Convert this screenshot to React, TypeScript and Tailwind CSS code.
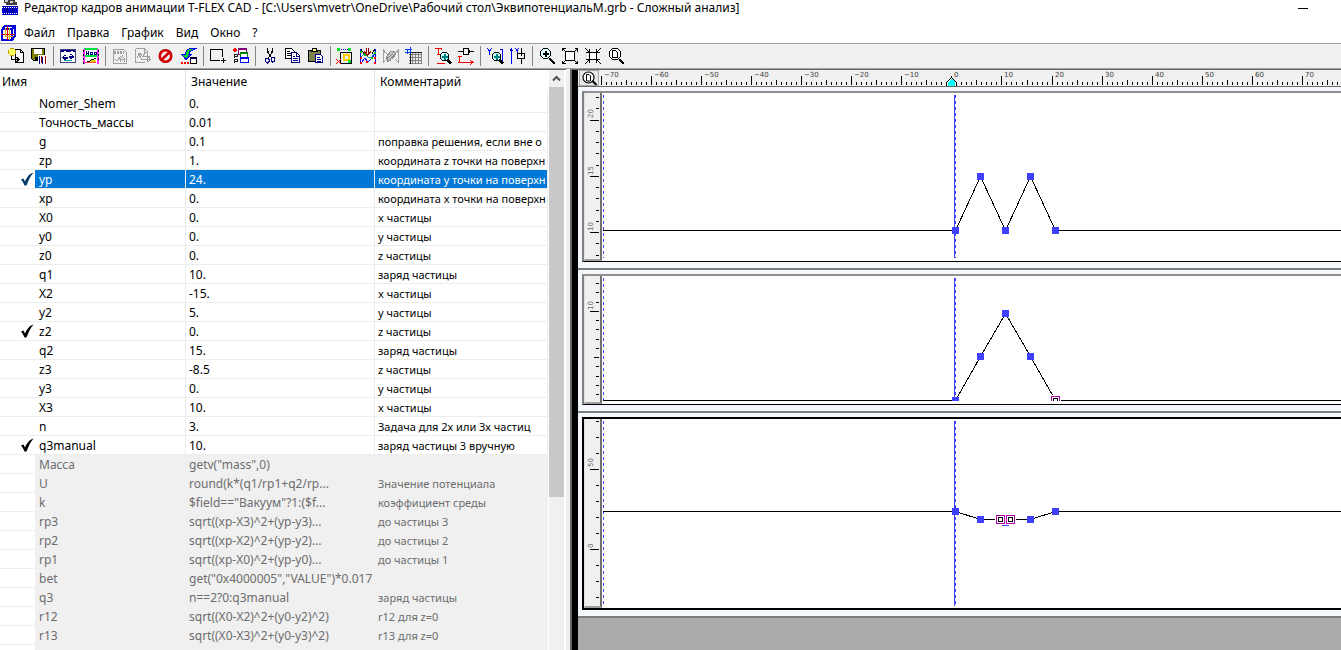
import React from "react";

type Stroke = [d: string, stroke?: string, fill?: string];

function Glyph({ strokes }: { strokes: Stroke[] }) {
  return (
    <svg
      className="block h-4 w-4 overflow-visible"
      viewBox="0 0 16 16"
      shapeRendering="crispEdges"
      aria-hidden="true"
    >
      {strokes.map(([d, stroke = "#000", fill = "none"], i) => (
        <path key={i} d={d} stroke={stroke} fill={fill} strokeWidth="1" />
      ))}
    </svg>
  );
}

const GREY = "#a0a0a0";
const NAVY = "#000080";
const BLUE = "#0000ff";
const RED = "#ff0000";
const GREEN = "#00c000";

const smallLens: Stroke[] = [
  ["M7.500 4.500h4l2 2v4l-2 2h-4l-2-2v-4z", "#000", "#c8ffff"],
  ["M9 6h1v5h-1zM7 8h5v1h-5z", "#008080", "#000"],
  ["M12 11.500l4 4M12 12.500l3.500 3.500M13 11.500l3.500 3.500"],
];

const icons: Record<string, Stroke[]> = {
  open: [
    ["M7.500 1.500h5l3 3v10h-8z", "#000", "#fff"],
    ["M12.500 1.500v3h3"],
    ["M1 1h6v6h-6z", "none", "#ffff66"],
    ["M0.500 2v4M2 0.500h4M7.500 2v4M2 7.500h4", "#c0a000"],
    ["M3.500 8v3.500h7M8.500 9l2.500 2.500l-2.500 2.500M9.500 10v3"],
  ],
  save: [
    ["M0.500 0.500h13v12h-11l-2-2z", "#000", "#808000"],
    ["M3 1h8v5h-8z", "none", "#fff"],
    ["M4 9h6v3h-6z", "none", "#000"],
    ["M7.500 7.500h8v8h-8z", "#fff", "#fff"],
    ["M8.500 8v8M11.500 9v7", NAVY],
    ["M10.500 8v7M14.500 8v8", "#a00000"],
  ],
  sync: [
    ["M0.500 1.500h15v13h-15z", "#404080", "#fff"],
    ["M1 2h14v2h-14z", "none", NAVY],
    ["M3.500 3h2M11 3h2", "#fff"],
    ["M3 9h4v1h-4zM9 8h4v1h-4z", NAVY, NAVY],
    ["M5.500 7l-3 2.500l3 2.500M10.500 6l3 2.500l-3 2.500", NAVY],
    ["M4 12.500h8", "#00a0a0"],
  ],
  film: [
    ["M0 0h16v16h-16z", "none", "#fff"],
    ["M1 0h14v2h-14zM1 7h14v2h-14z", "none", "#00e040"],
    ["M0 1h2v15h-2zM14 1h2v15h-2z", "none", "#ff30ff"],
    ["M0.500 2v2M0.500 6v2M0.500 10v2M0.500 14v2M15.500 2v2M15.500 6v2M15.500 10v2"],
    ["M3.500 3v4M5.500 3v4M3 5.500h3M7.500 4.500h2v2h-2zM11.500 4.500h2v2h-2z", NAVY],
    ["M3.500 13.500h3l2-2l5-1"],
    ["M2 14.500h11", "#ff4040"],
    ["M8 12.500h5M7 13.500h6", "#e0d000"],
  ],
  sheetA: [
    ["M1.500 1.500h10l3 3v11h-13z", GREY],
    ["M2 3h10v3h-10z", "none", GREY],
    ["M4.500 2v4M7.500 2v4M10.500 2v4", "#f0f0f0"],
    ["M3 11l2 2l4-5M8.500 14v-3l2-3l2 3v3M9 11.500h3", GREY],
  ],
  sheetArrow: [
    ["M0.500 0.500h9l3 3v3M0.500 1v13.500h9M9.500 1v3h3", GREY],
    ["M2 10l3-5l3 4l2-5M3 5l4 7", GREY],
    ["M5.500 11.500h10M12.500 7.500l3 4l-3 3M12.500 8v6M14.500 8v3M8 8.500h4v5", GREY],
  ],
  route: [
    ["M14.500 0.500h-6l-3 2l-1.500 4h-3.500l4.500 5l5-5h-2l1-3l2-1z", BLUE, "#00d020"],
    ["M0 14h2v2h-2zM3 14h2v2h-2zM6 14h2v2h-2z", "none", RED],
    ["M9.500 9.500h6v6h-6z", "#000", "#fff"],
    ["M9 10.500h7", NAVY],
  ],
  frameAdd: [["M12.500 9v-7.500h-12v11h9M11 12.500h5M13.500 10v5"]],
  windows: [
    ["M1 0h2v1h1v2h-1v1h-2v-1h-1v-2h1z", "none", RED],
    ["M1.500 6v4M1 6.500h3v2h-3M1.500 11v4M1 11.500h3v2h-3", "#202020"],
    ["M5.500 0.500h8v6h-8z", "#800080", "#fff"],
    ["M5 1.500h9", "#800080"],
    ["M7.500 4.500h7v6h-7z", "#008000", "#fff"],
    ["M7 5.500h8", "#008000"],
    ["M7.500 9.500h8v5h-8z", BLUE, "#fff"],
    ["M7 10.500h9", BLUE],
  ],
  cut: [
    ["M5.500 0v4l2 3l2 3M10.500 0v4l-2 3l-2 3M6.500 3v3M9.500 3v3"],
    ["M4 10.500h2l1 1v2l-1.500 1.500l-2-1.500v-2zM10 9.500h2l.500 1.500v2l-2 1l-1.500-2v-2z", NAVY],
  ],
  copy: [
    ["M0.500 0.500h6l3 3v7h-9z", "#000", "#fff"],
    ["M2 3.500h3M2 5.500h5M2 7.500h5"],
    ["M6.500 4.500h5l3 3v7h-8z", NAVY, "#fff"],
    ["M11.500 5v3h3M8 8.500h2M8 10.500h5M8 12.500h5", NAVY],
  ],
  paste: [
    ["M0.500 2.500h12v11h-12z", "#000", "#808050"],
    ["M4.500 0.500h4v3h-4z", "#000", "#ffff80"],
    ["M3 3.500h7"],
    ["M7.500 6.500h5l2 2v6h-7z", NAVY, "#fff"],
    ["M9 9.500h3M9 11.500h4M9 13.500h4", NAVY],
  ],
  nodes: [
    ["M4 1.500h1M6 1.500h1M8 1.500h1M10 1.500h1", BLUE],
    ["M3.500 4.500h11v11h-11z"],
    ["M6.500 6.500h6v6h-6zM7.500 7.500h4v4h-4z", "#ffd000"],
    ["M8 8h3v3h-3z", "none", "#f0f0f0"],
    ["M0 0h3v3h-3zM11 0h3v3h-3zM11 12h3v3h-3z", "none", "#00e030"],
    ["M-1 11l5 5M4 11l-5 5", RED],
  ],
  wave: [
    ["M0.500 1v14M15.500 1v14", BLUE],
    ["M1 9l4-4l3 4l3 1l4-5", "#00a0a0"],
    ["M1 15l4-5l3 4l3-3l4-5", BLUE],
    ["M1 1l3 5M15 1l-3 5", "#000"],
    ["M0 3h2v2h-2zM4 6h2v2h-2zM11 9h2v2h-2zM14 4h2v2h-2z", "none", GREEN],
    ["M0 9h2v2h-2zM0 14h2v2h-2zM6 13h2v2h-2zM14 14h2v2h-2zM14 9h2v2h-2z", "none", RED],
    ["M6.500 0v5M8.500 0v5M4 3.500l3.500 3.500l3.500-3.500", "#900000"],
  ],
  waveGrey: [
    ["M0.500 1v14M15.500 1v14M1.500 2v3M14.500 2v3M0 2l4 4M0 15l4-4M15 2l-3 3M15 14l-3-3", GREY],
    ["M3.500 8.500l4-5h4l1 3l-4 5l-4 2z", "#909090", "#c8c8c8"],
    ["M5 10l5-5M7 11l5-5M5 13l-1-4", "#808080"],
  ],
  grid: [
    ["M6.500 4v11M9.500 4v11M12.500 4v11M15.500 4v11M3 6.500h13M3 9.500h13M3 12.500h13M3 15.500h13", "#808080"],
    ["M4.500 4v12M4 4.500h12", "#202020"],
    ["M1.500 1v5M4.500 -1v7M-1 1.500h7M-1 4.500h6", "#0040f0"],
  ],
  timeZoom: [["M0.500 1v-0.500h6v1M3.500 0v6M2 6.500h3M1.500 15.500h8", RED], ...smallLens],
  timeMove: [
    ["M0 3.500h5M5.500 0.500h5v6h-5zM11 3.500h5M11.500 2v3"],
    ["M0 8.500h4M1.500 9v5M0 14.500h15M12 12l3 2.500l-3 2", RED],
  ],
  valueZoom: [["M0 0l2.500 3v4M5 0l-2.500 3M13 1.500h2.500v12h-2.500", BLUE], ...smallLens],
  valueMove: [
    ["M1.500 0v16M0 3l1.500-2l1.500 2M5 0l2 2.500v3M9 0l-2 2.500", BLUE],
    ["M11.500 0v5M7.500 5.500h7v5h-7zM11.500 11v5M11.500 5v3"],
  ],
  zoomIn: [
    ["M4.500 0.500h4l3 3v4l-3 3h-4l-3-3v-4z", "#000", "#e0ffff"],
    ["M6 3h1v5h-1zM4 5h5v1h-5z", "#000", "#000"],
    ["M10 10l6 6M10 11l5 5M11 10l5 5"],
  ],
  zoomOut: [
    ["M3.500 3.500h9v9h-9z", "#000", "#fff"],
    ["M0 0l4 4M16 0l-4 4M0 16l4-4M16 16l-4-4M0.500 3v-2.500h3M12.500 0.500h3v3M0.500 12.500v3h3M12.500 15.500h3v-3"],
  ],
  zoomFit: [
    ["M4.500 4.500h7v7h-7z", "#000", "#fff"],
    ["M0 0l4 4M16 0l-4 4M0 16l4-4M16 16l-4-4M1 4.500h4M11 4.500h4M1 11.500h4M11 11.500h4M4.500 1v4M11.500 1v4M4.500 11v4M11.500 11v4"],
  ],
  zoomPage: [
    ["M4.500 0.500h5l3 3v5l-3 3h-5l-3-3v-5z", "#000", "#fff"],
    ["M4.500 2.500h3l2 2v5h-5z"],
    ["M11 11l5 5M11 12l4 4M12 11l4 4"],
  ],
};

const toolbar: [string, string][][] = [
  [["open", "Открыть"], ["save", "Сохранить"]],
  [["sync", "Обновить"], ["film", "Анимация"]],
  [["sheetA", "Лист"], ["sheetArrow", "Экспорт"], ["stop", "Стоп"], ["route", "Маршрут"]],
  [["frameAdd", "Новое окно"], ["windows", "Окна"]],
  [["cut", "Вырезать"], ["copy", "Копировать"], ["paste", "Вставить"]],
  [["nodes", "Узлы"], ["wave", "Графики"], ["waveGrey", "Сгладить"], ["grid", "Сетка"]],
  [["timeZoom", "Масштаб по времени"], ["timeMove", "Сдвиг по времени"]],
  [["valueZoom", "Масштаб по значению"], ["valueMove", "Сдвиг по значению"]],
  [["zoomIn", "Увеличить"], ["zoomOut", "Уменьшить"], ["zoomFit", "Показать все"], ["zoomPage", "Страница"]],
];

function ToolIcon({ name }: { name: string }) {
  if (name === "stop") {
    return (
      <svg className="block h-4 w-4" viewBox="0 0 16 16" aria-hidden="true">
        <circle cx="7.500" cy="8" r="5.500" fill="#fff" stroke="#800000" strokeWidth="3" />
        <circle cx="7.500" cy="8" r="5.500" fill="#f0f0f0" stroke="#e00000" strokeWidth="2.200" />
        <path d="M3.500 12l8-8" stroke="#d00000" strokeWidth="2.500" />
      </svg>
    );
  }
  return <Glyph strokes={icons[name]} />;
}

type Row = { name: string; value: string; comment: string; checked?: boolean; selected?: boolean };

const rows: Row[] = [
  { name: "Nomer_Shem", value: "0.", comment: "" },
  { name: "Точность_массы", value: "0.01", comment: "" },
  { name: "g", value: "0.1", comment: "поправка решения, если вне о" },
  { name: "zp", value: "1.", comment: "координата z точки на поверхн" },
  { name: "yp", value: "24.", comment: "координата y точки на поверхн", checked: true, selected: true },
  { name: "xp", value: "0.", comment: "координата x точки на поверхн" },
  { name: "X0", value: "0.", comment: "x частицы" },
  { name: "y0", value: "0.", comment: "y частицы" },
  { name: "z0", value: "0.", comment: "z частицы" },
  { name: "q1", value: "10.", comment: "заряд частицы" },
  { name: "X2", value: "-15.", comment: "x частицы" },
  { name: "y2", value: "5.", comment: "y частицы" },
  { name: "z2", value: "0.", comment: "z частицы", checked: true },
  { name: "q2", value: "15.", comment: "заряд частицы" },
  { name: "z3", value: "-8.5", comment: "z частицы" },
  { name: "y3", value: "0.", comment: "y частицы" },
  { name: "X3", value: "10.", comment: "x частицы" },
  { name: "n", value: "3.", comment: "Задача для 2х или 3х частиц" },
  { name: "q3manual", value: "10.", comment: "заряд частицы 3 вручную", checked: true },
];

const computedRows: Row[] = [
  { name: "Масса", value: 'getv("mass",0)', comment: "" },
  { name: "U", value: "round(k*(q1/rp1+q2/rp...", comment: "Значение потенциала" },
  { name: "k", value: '$field=="Вакуум"?1:($f...', comment: "коэффициент среды" },
  { name: "rp3", value: "sqrt((xp-X3)^2+(yp-y3)...", comment: "до частицы 3" },
  { name: "rp2", value: "sqrt((xp-X2)^2+(yp-y2)...", comment: "до частицы 2" },
  { name: "rp1", value: "sqrt((xp-X0)^2+(yp-y0)...", comment: "до частицы 1" },
  { name: "bet", value: 'get("0x4000005","VALUE")*0.017', comment: "" },
  { name: "q3", value: "n==2?0:q3manual", comment: "заряд частицы" },
  { name: "r12", value: "sqrt((X0-X2)^2+(y0-y2)^2)", comment: "r12 для z=0" },
  { name: "r13", value: "sqrt((X0-X3)^2+(y0-y3)^2)", comment: "r13 для z=0" },
  { name: "", value: "", comment: "" },
];

function Check({ dark }: { dark?: boolean }) {
  return (
    <svg className="ml-5 block" width="15" height="14" viewBox="0 0 15 14" role="img" aria-label="Отмечено">
      <path
        d="M1 7.500L3.500 6.500L5 9.500C7 5 9.500 1.500 13.500 0.500C10.500 4 8.500 8 6.500 13.500H4.500C3.500 11 2.500 9 1 7.500Z"
        fill={dark ? "#003a6b" : "#000"}
      />
    </svg>
  );
}

function VariableRow({ row, computed }: { row: Row; computed?: boolean }) {
  const cell = computed
    ? "whitespace-nowrap border-b border-r border-[#f0f0f0] bg-[#f0f0f0] p-0 pl-[3px] pt-[2px] text-[#6d6d6d]"
    : row.selected
      ? "whitespace-nowrap border-b border-r border-[#ededed] bg-[#0078d7] p-0 pl-[3px] pt-[2px] text-white"
      : "whitespace-nowrap border-b border-r border-[#ededed] p-0 pl-[3px] pt-[2px]";
  return (
    <tr className="h-[19px]">
      <td className="border-b border-[#ededed] p-0">{row.checked && <Check dark={row.selected} />}</td>
      <td className={cell}>
        <span className="pl-px">{row.name}</span>
      </td>
      <td className={cell}>{row.value}</td>
      <td className={`${cell} text-[11px]`}>{row.comment}</td>
    </tr>
  );
}

function VariablesPane() {
  return (
    <section className="flex w-[566px] shrink-0 overflow-hidden border-t border-[#696969] bg-white">
      <div className="min-w-0 flex-1 overflow-hidden">
        <table className="w-full table-fixed border-separate border-spacing-0 text-xs leading-4">
          <colgroup>
            <col className="w-[35px]" />
            <col className="w-[151px]" />
            <col className="w-[189px]" />
            <col />
          </colgroup>
          <thead>
            <tr className="h-6 text-left">
              <th colSpan={2} className="border-r border-[#e2e2e2] p-0 pl-[2px] font-normal">Имя</th>
              <th className="border-r border-[#e2e2e2] p-0 pl-[5px] font-normal">Значение</th>
              <th className="p-0 pl-[5px] font-normal">Комментарий</th>
            </tr>
          </thead>
          <tbody>
            {rows.map((r) => (
              <VariableRow key={r.name} row={r} />
            ))}
            {computedRows.map((r) => (
              <VariableRow key={r.name} row={r} computed />
            ))}
          </tbody>
        </table>
      </div>
      <div className="ml-px flex w-[15px] flex-col bg-[#f0f0f0]">
        <button aria-label="Прокрутить вверх" className="flex h-[17px] items-center justify-center">
          <svg width="9" height="7" viewBox="0 0 9 7" aria-hidden="true">
            <path d="M1 5.500L4.500 2L8 5.500" fill="none" stroke="#505050" strokeWidth="2" />
          </svg>
        </button>
        <div className="h-[410px] bg-[#c9c9c9]" />
      </div>
      <div className="w-[2px] bg-white" />
    </section>
  );
}

const UNIT = 5;

function TimeRuler() {
  const ticks = Array.from({ length: 400 }, (_, i) => i - 70);
  return (
    <svg className="block h-4 w-0 min-w-0 flex-1" shapeRendering="crispEdges" role="img" aria-label="Шкала времени">
      {ticks.map((t) => {
        const x = Math.round((t + 70) * 5.006) + 2;
        const h = t % 10 === 0 ? 9 : t % 5 === 0 ? 5 : 3;
        return <rect key={t} x={x} y={15 - h} width="1" height={h} fill="#000" />;
      })}
      {ticks
        .filter((t) => t % 10 === 0 && t <= 70)
        .map((t) => (
          <text key={t} x={Math.round((t + 70) * 5.006) + 5} y="7" className="fill-[#404040] font-['DejaVu_Sans'] text-[7px]">
            {t < 0 ? `−${-t}` : t}
          </text>
        ))}
      <path d="M347.500 15.500v-3l5-5l5 5v3" fill="#fff" stroke="#000" />
      <path d="M349 16v-4l3-3h1l3 3v4z" fill="#00ffff" />
    </svg>
  );
}

type Tick = { y: number; size: number };
type Point = { t: number; y: number; picked?: boolean };
type Graph = {
  title: string;
  frame: string;
  box: string;
  ticks: Tick[];
  labels: { y: number; text: string }[];
  points: Point[];
  axis: number;
  top: number;
  bottom: number;
  underline?: boolean;
};

function series(from: number, step: number, count: number, size: (i: number) => number): Tick[] {
  return Array.from({ length: count }, (_, i) => ({ y: Math.round(from + i * step), size: size(i) }));
}

const graphs: Graph[] = [
  {
    title: "yp",
    frame: "border-l-2 border-t-2 border-b border-l-[#808080] border-t-[#909090] border-b-black",
    box: "h-[168px]",
    ticks: series(4, 11.25, 15, (i) => (i % 5 === 2 ? 9 : 3)),
    labels: [
      { y: 26, text: "20" },
      { y: 83, text: "15" },
      { y: 139, text: "10" },
    ],
    points: [
      { t: 0, y: 137 },
      { t: 5, y: 83 },
      { t: 10, y: 137 },
      { t: 15, y: 83 },
      { t: 20, y: 137 },
    ],
    axis: 137,
    top: 2,
    bottom: 165,
  },
  {
    title: "z2",
    frame: "border-l-2 border-t-2 border-b border-l-[#808080] border-t-[#909090] border-b-black",
    box: "h-[128px]",
    ticks: series(7, 9.25, 13, (i) => (i === 3 ? 9 : i === 8 ? 5 : 3)),
    labels: [{ y: 35, text: "10" }],
    points: [
      { t: 0, y: 124 },
      { t: 5, y: 80 },
      { t: 10, y: 37 },
      { t: 15, y: 80 },
      { t: 20, y: 124, picked: true },
    ],
    axis: 124,
    top: 2,
    bottom: 125,
  },
  {
    title: "q3manual",
    frame: "border-l-2 border-y-2 border-black",
    box: "h-[189px]",
    ticks: series(2, 16, 12, (i) => (i === 3 || i === 8 ? 9 : 3)),
    labels: [
      { y: 49, text: "50" },
      { y: 130, text: "0" },
    ],
    points: [
      { t: 0, y: 92 },
      { t: 5, y: 100 },
      { t: 9, y: 100, picked: true },
      { t: 11, y: 100, picked: true },
      { t: 15, y: 100 },
      { t: 20, y: 92 },
    ],
    axis: 92,
    top: 2,
    bottom: 187,
    underline: true,
  },
];

const ZERO = 352;

function GraphPanel({ graph }: { graph: Graph }) {
  const line = graph.points.map((p) => `L${ZERO + p.t * UNIT + 0.5} ${p.y + 0.5}`).join("");
  return (
    <div className="border-b-2 border-[#7c7c7c] bg-[#f4f7fc] pb-[6px] pl-1 pt-1">
      <div className={`flex bg-white ${graph.frame}`}>
        <div
          className={`mr-px w-[18px] shrink-0 border-b-2 border-l border-r-2 border-b-[#a0a0a0] border-l-[#e3e3e3] border-r-[#707070] bg-[#f0f0f0] ${graph.box}`}
        >
          <svg className="block h-full w-full" shapeRendering="crispEdges" aria-hidden="true">
            {graph.ticks.map((t) => (
              <rect key={t.y} x={14 - t.size} y={t.y} width={t.size} height="1" fill="#000" />
            ))}
            {graph.labels.map((l) => (
              <text
                key={l.text}
                transform={`translate(8 ${l.y - 1}) rotate(-90)`}
                className="fill-[#666666] font-['DejaVu_Sans'] text-[7px]"
              >
                {l.text}
              </text>
            ))}
          </svg>
        </div>
        <svg
          className={`block w-0 min-w-0 flex-1 ${graph.box}`}
          shapeRendering="crispEdges"
          role="img"
          aria-label={`График ${graph.title}`}
        >
          <svg width="100%" height={graph.bottom} overflow="hidden">
            <path d={`M0.5 ${graph.top}V${graph.bottom}`} stroke="#4040ff" strokeDasharray="3 3" />
            <path d={`M${ZERO - 0.5} ${graph.top}V${graph.bottom}`} stroke="#4040ff" />
            <path d={`M${ZERO + 0.5} ${graph.top}V${graph.bottom}`} stroke="#4040ff" strokeDasharray="3 3" />
            <path d={`M0 ${graph.axis + 0.5}${line}H4000`} fill="none" stroke="#000" />
            {graph.points.map((p) => {
              const x = ZERO + p.t * UNIT;
              return p.picked ? (
                <g key={p.t}>
                  <rect x={x - 5} y={p.y - 5} width="11" height="11" fill="#fff" />
                  <rect x={x - 3.5} y={p.y - 3.5} width="8" height="8" fill="#fff" stroke="#b000b0" />
                  <rect x={x - 1.5} y={p.y - 1.5} width="4" height="4" fill="#fff" stroke="#000" />
                </g>
              ) : (
                <rect key={p.t} x={x - 3} y={p.y - 3} width="7" height="7" fill="#4040ff" />
              );
            })}
            {graph.underline && <rect x={ZERO + 47} y="106" width="7" height="1" fill="#4040ff" />}
          </svg>
        </svg>
      </div>
    </div>
  );
}

function GraphsPane() {
  return (
    <section className="flex min-w-0 flex-1 flex-col overflow-hidden border-l-2 border-t border-[#696969]">
      <div className="flex min-h-0 flex-1 flex-col border-l-[6px] border-black bg-[#ababab]">
        <div className="flex h-[17px] shrink-0 border-b border-[#696969] bg-[#f0f0f0] pl-px">
          <button aria-label="Масштаб" className="flex h-4 w-5 items-center justify-center border border-[#a8a8a8] bg-[#e6e6e6]">
            <svg width="15" height="14" viewBox="0 0 15 14" aria-hidden="true">
              <circle cx="6.500" cy="6.500" r="5.500" fill="#fff" stroke="#000" strokeWidth="1.200" />
              <path d="M4.500 3.500h2.500l1.500 1.500v5h-4z" fill="none" stroke="#000" />
              <path d="M10.500 10l4 4" stroke="#000" strokeWidth="2" />
            </svg>
          </button>
          <TimeRuler />
        </div>
        {graphs.map((g) => (
          <GraphPanel key={g.title} graph={g} />
        ))}
      </div>
    </section>
  );
}

export default function App() {
  return (
    <div className="flex h-screen flex-col overflow-hidden bg-[#f0f0f0] font-['Noto_Sans','Open_Sans',sans-serif] text-xs text-black">
      <header className="flex h-5 shrink-0 items-start bg-white pl-[2px]">
        <svg className="block shrink-0" width="16" height="16" viewBox="0 0 16 16" shapeRendering="crispEdges" aria-hidden="true">
          <path d="M2 0h11v2h2v3H4V3H2z" fill="#404040" />
          <path d="M3 0h3v2H3zM8 1h3v2H8z" fill="#d0d0d0" />
          <path d="M0 6h16v9H0z" fill="#0000c8" />
          <path d="M0 7.500h16M0 13.500h16" stroke="#fff" strokeDasharray="1 1" />
          <path d="M5.500 8v5M10.500 8v5" stroke="#000060" />
        </svg>
        <h1 className="ml-[6px] flex-1 truncate leading-4">
          Редактор кадров анимации T-FLEX CAD - [C:\Users\mvetr\OneDrive\Рабочий стол\ЭквипотенциальM.grb - Сложный анализ]
        </h1>
        <button aria-label="Свернуть" className="mr-8 flex h-4 w-[11px] items-center">
          <span className="h-px w-[10px] bg-black" />
        </button>
      </header>
      <nav className="flex h-[23px] shrink-0 items-center bg-white pt-[2px]">
        <svg className="block shrink-0" width="16" height="16" viewBox="0 0 16 16" shapeRendering="crispEdges" aria-hidden="true">
          <path d="M1 4l4-3h10v10l-4 4H1z" fill="#fff" />
          <path d="M2 4h10v10M2 4v11h10l3-4V1H5L2 4M12 4l3-3" fill="none" stroke="#0000e0" strokeWidth="2" />
          <path d="M7.500 1v14M1 9.500h14" stroke="#e00000" />
          <path d="M5.500 3v8M5 11.500h8M9.500 3v12" stroke="#e0b000" />
        </svg>
        <div className="ml-2 flex gap-3">
          {["Файл", "Правка", "График", "Вид", "Окно", "?"].map((m) => (
            <button key={m}>{m}</button>
          ))}
        </div>
      </nav>
      <div role="toolbar" className="flex h-[26px] shrink-0 items-center border-y border-[#a0a0a0] pl-1">
        {toolbar.map((group, i) => (
          <React.Fragment key={i}>
            {i > 0 && (
              <div className="flex h-5 w-[6px] justify-center">
                <div className="w-px bg-[#858585]" />
              </div>
            )}
            {group.map(([name, label]) => (
              <button key={name} aria-label={label} className="flex h-6 w-[23px] items-center justify-end pr-[3px]">
                <ToolIcon name={name} />
              </button>
            ))}
          </React.Fragment>
        ))}
      </div>
      <main className="flex min-h-0 flex-1 gap-1">
        <VariablesPane />
        <GraphsPane />
      </main>
    </div>
  );
}
